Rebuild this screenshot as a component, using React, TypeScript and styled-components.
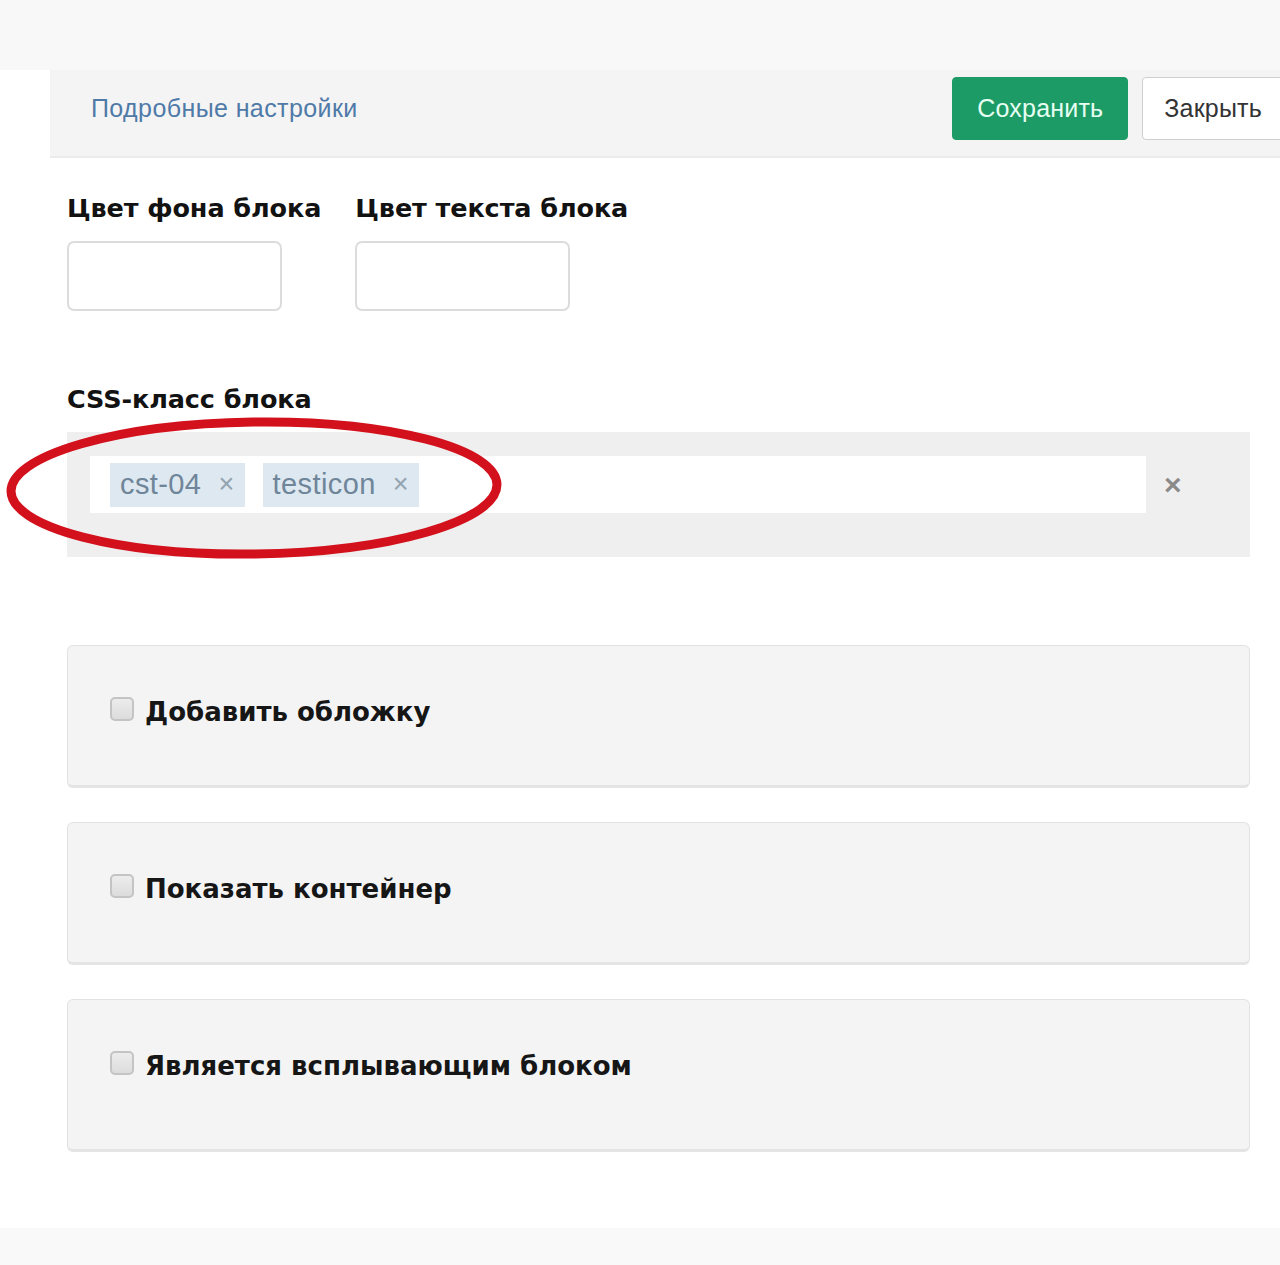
import React from "react";
import styled, { createGlobalStyle } from "styled-components";

const Global = createGlobalStyle`
  html, body { margin: 0; padding: 0; background: #ffffff; }
  body { font-family: "Liberation Sans", Arial, sans-serif; overflow-x: hidden; }
  #root { width: 1280px; overflow: hidden; }
`;

const Page = styled.div`
  width: 1280px;
  height: 1265px;
  display: flex;
  flex-direction: column;
  background: #ffffff;
  overflow: hidden;
`;

const TopBand = styled.div`
  height: 70px;
  background: #f8f8f8;
  flex: none;
`;

const Main = styled.div`
  flex: 1;
  display: flex;
  flex-direction: column;
  background: #ffffff;
`;

const Toolbar = styled.div`
  margin-left: 50px;
  height: 88px;
  box-sizing: border-box;
  background: #f4f4f5;
  border-bottom: 2px solid #ebebeb;
  display: flex;
  align-items: center;
  padding: 0 0 10px 41px;
  flex: none;
`;

const DetailsLink = styled.a`
  font-size: 25px;
  color: #4f7aa8;
  text-decoration: none;
  letter-spacing: 0.4px;
  cursor: pointer;
`;

const ButtonGroup = styled.div`
  margin-left: auto;
  display: flex;
  flex: none;
  gap: 14px;
  margin-right: -4px;
`;

const Button = styled.button<{ $primary?: boolean }>`
  height: 63px;
  flex: none;
  padding: 0 ${(p) => (p.$primary ? "24px" : "21px")};
  font-family: "Liberation Sans", Arial, sans-serif;
  font-size: 25px;
  letter-spacing: 0.2px;
  border-radius: 4px;
  cursor: pointer;
  background: ${(p) => (p.$primary ? "#1d9b66" : "#ffffff")};
  color: ${(p) => (p.$primary ? "#e6fff2" : "#333333")};
  border: 1px solid ${(p) => (p.$primary ? "#1d9b66" : "#cfcfcf")};
`;

const Content = styled.div`
  padding: 35px 30px 0 67px;
  display: flex;
  flex-direction: column;
`;

const ColorRow = styled.div`
  display: flex;
  gap: 34px;
`;

const Field = styled.div`
  display: flex;
  flex-direction: column;
`;

const Label = styled.label`
  font-family: "DejaVu Sans", Verdana, sans-serif;
  font-weight: bold;
  font-size: 25.5px;
  letter-spacing: -0.1px;
  color: #121212;
  line-height: 30px;
`;

const ColorInput = styled.div`
  margin-top: 18px;
  width: 211px;
  height: 66px;
  border: 2px solid #dcdcdc;
  border-radius: 7px;
  background: #ffffff;
`;

const CssSection = styled.div`
  margin-top: 73px;
  display: flex;
  flex-direction: column;
`;

const SelectWrap = styled.div`
  position: relative;
  margin-top: 18px;
  width: 1183px;
  height: 125px;
  background: #efefef;
  box-sizing: border-box;
  padding: 24px 0 0 23px;
  display: flex;
  align-items: flex-start;
`;

const SelectInner = styled.div`
  width: 1056px;
  height: 57px;
  background: #ffffff;
  display: flex;
  align-items: center;
  gap: 18px;
  padding-left: 20px;
  box-sizing: border-box;
`;

const Tag = styled.span`
  height: 44px;
  display: flex;
  align-items: center;
  gap: 17px;
  padding: 0 10px 0 10px;
  background: #dde8f0;
  color: #6f8599;
  font-size: 29px;
  letter-spacing: 0.4px;
`;

const TagX = styled.span`
  font-size: 27px;
  color: #93a3b0;
`;

const ClearX = styled.span`
  margin-left: 18px;
  height: 57px;
  display: flex;
  align-items: center;
  font-size: 30px;
  font-weight: bold;
  color: #8a8a8a;
`;

const Ellipse = styled.svg`
  position: absolute;
  left: -63px;
  top: -16px;
  width: 500px;
  height: 144px;
  pointer-events: none;
  overflow: visible;
`;

const Cards = styled.div`
  margin-top: 88px;
  display: flex;
  flex-direction: column;
  gap: 34px;
`;

const Card = styled.div<{ $h: number }>`
  width: 1183px;
  height: ${(p) => p.$h}px;
  box-sizing: border-box;
  background: #f4f4f4;
  border: 1px solid #e2e2e2;
  border-bottom: 3px solid #e4e4e4;
  border-radius: 6px;
  padding: 49px 0 0 42px;
  display: flex;
  align-items: flex-start;
  gap: 12px;
`;

const Check = styled.span`
  width: 24px;
  height: 24px;
  box-sizing: border-box;
  border: 2px solid #c4c4c4;
  border-radius: 5px;
  background: linear-gradient(#ececec, #dcdcdc);
  flex: none;
  margin-top: 2px;
`;

const CardLabel = styled.span`
  font-family: "DejaVu Sans", Verdana, sans-serif;
  font-weight: bold;
  font-size: 26px;
  letter-spacing: 0px;
  color: #161616;
  line-height: 34px;
  margin-left: -1px;
`;

const BottomBand = styled.div`
  margin-top: auto;
  height: 37px;
  background: #f9f9f9;
  flex: none;
`;

const options = [
  { label: "Добавить обложку", h: 143 },
  { label: "Показать контейнер", h: 143 },
  { label: "Является всплывающим блоком", h: 153 },
];

export default function App() {
  return (
    <>
      <Global />
      <Page>
        <TopBand />
        <Main>
          <Toolbar>
            <DetailsLink>Подробные настройки</DetailsLink>
            <ButtonGroup>
              <Button $primary>Сохранить</Button>
              <Button>Закрыть</Button>
            </ButtonGroup>
          </Toolbar>
          <Content>
            <ColorRow>
              <Field>
                <Label>Цвет фона блока</Label>
                <ColorInput />
              </Field>
              <Field>
                <Label>Цвет текста блока</Label>
                <ColorInput />
              </Field>
            </ColorRow>
            <CssSection>
              <Label>CSS-класс блока</Label>
              <SelectWrap>
                <SelectInner>
                  <Tag>
                    cst-04 <TagX>×</TagX>
                  </Tag>
                  <Tag>
                    testicon <TagX>×</TagX>
                  </Tag>
                </SelectInner>
                <ClearX>×</ClearX>
                <Ellipse viewBox="0 0 500 144">
                  <ellipse
                    cx="250"
                    cy="72"
                    rx="243"
                    ry="66"
                    fill="none"
                    stroke="#d3111c"
                    strokeWidth="9"
                    transform="rotate(-0.8 250 72)"
                  />
                </Ellipse>
              </SelectWrap>
            </CssSection>
            <Cards>
              {options.map((o) => (
                <Card key={o.label} $h={o.h}>
                  <Check />
                  <CardLabel>{o.label}</CardLabel>
                </Card>
              ))}
            </Cards>
          </Content>
          <BottomBand />
        </Main>
      </Page>
    </>
  );
}
